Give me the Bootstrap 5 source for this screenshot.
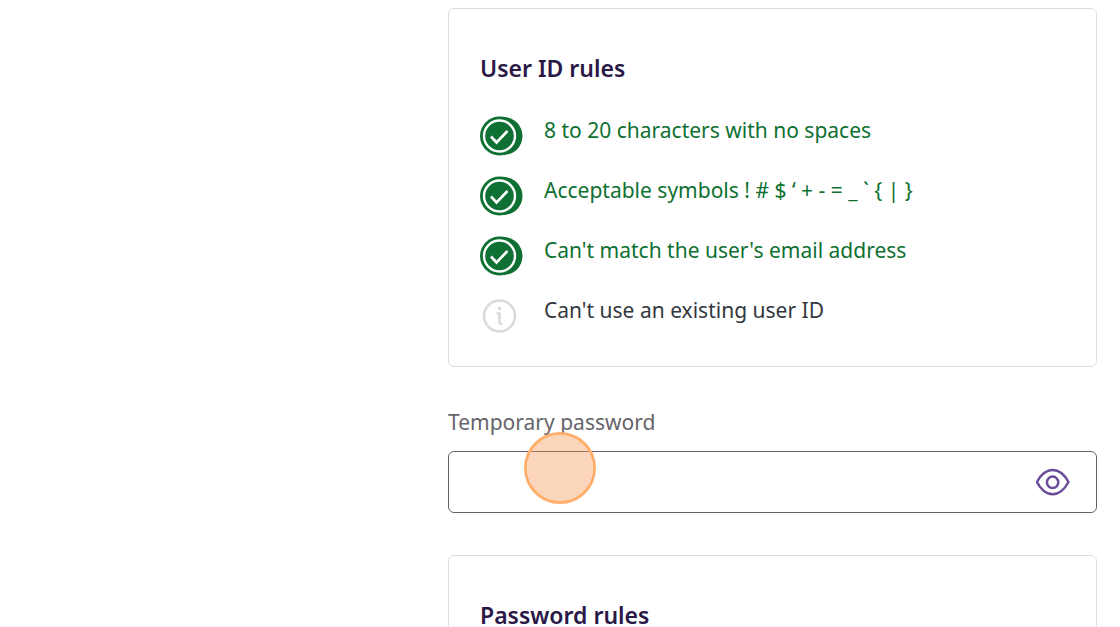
<!DOCTYPE html>
<html lang="en">
<head>
<meta charset="utf-8">
<meta name="viewport" content="width=device-width, initial-scale=1">
<title>Create user</title>
<link href="https://cdn.jsdelivr.net/npm/bootstrap@5.3.0/dist/css/bootstrap.min.css" rel="stylesheet">
<style>
  body { font-family: "Noto Sans", "Open Sans", sans-serif; font-size: 21px; line-height: 30px; color: #333740; background: #fff; }
  .page-view { height: 100vh; overflow: hidden; }
  .form-area { margin-left: 40%; padding: 8px 23px 0 0; }
  .rules-card { border: 1px solid #dedede; border-radius: 6px; padding: 43px 31px 31px; }
  .rules-title { font-size: 23px; line-height: 32px; font-weight: 600; color: #2a1846; margin: 0 0 31px; }
  .rule-list { display: grid; gap: 20px; }
  .rule-item { display: flex; gap: 20px; height: 40px; }
  .rule-item svg { flex: none; width: 44px; height: 42px; }
  .rule-met { color: #0e7032; }
  .field-label { color: #66646a; margin: 40px 0 14px; line-height: 30px; }
  .password-box { height: 62px; margin-bottom: 42px; }
  .password-box .form-control { height: 100%; border: 1px solid #646068; border-radius: 6px; padding: 0 88px 0 20px; font-size: 21px; }
  .reveal-btn { right: 24px; top: 11px; width: 40px; height: 40px; }
  .click-marker { left: 76px; top: -19px; width: 72px; height: 72px; border: 3px solid #ffae6b; background: rgba(247, 136, 54, .34); background-clip: padding-box; pointer-events: none; z-index: 5; }
</style>
</head>
<body>
<svg class="d-none" aria-hidden="true">
  <symbol id="icon-met" viewBox="0 0 44 40">
    <ellipse cx="23.500" cy="20" rx="19" ry="19" fill="#0e7032"/>
    <circle cx="19.500" cy="20" r="19.500" fill="#0e7032"/>
    <circle cx="19.500" cy="20" r="15.500" fill="none" stroke="#fff" stroke-width="2.400"/>
    <path d="M11 20.500l5.500 6L27.500 15" fill="none" stroke="#fff" stroke-width="2.600"/>
  </symbol>
  <symbol id="icon-info" viewBox="0 0 44 40">
    <circle cx="19.500" cy="20" r="15.500" fill="none" stroke="#dadada" stroke-width="2.500"/>
    <path d="M16.500 17.500h3v9q0 1.500 3 1.500" fill="none" stroke="#dadada" stroke-width="2.500"/>
    <circle cx="19.500" cy="12.500" r="1.700" fill="#dadada"/>
  </symbol>
</svg>
<main class="page-view">
  <div class="form-area">
    <section class="rules-card">
      <h2 class="rules-title">User ID rules</h2>
      <ul class="rule-list list-unstyled mb-0">
        <li class="rule-item rule-met"><svg aria-hidden="true"><use href="#icon-met"/></svg><span>8 to 20 characters with no spaces</span></li>
        <li class="rule-item rule-met"><svg aria-hidden="true"><use href="#icon-met"/></svg><span>Acceptable symbols ! # $ ‘ + - = _ ` { | }</span></li>
        <li class="rule-item rule-met"><svg aria-hidden="true"><use href="#icon-met"/></svg><span>Can't match the user's email address</span></li>
        <li class="rule-item"><svg aria-hidden="true"><use href="#icon-info"/></svg><span>Can't use an existing user ID</span></li>
      </ul>
    </section>
    <label class="field-label d-block" for="temporary-password">Temporary password</label>
    <div class="password-box position-relative">
      <input class="form-control" type="password" id="temporary-password">
      <button class="reveal-btn btn p-0 border-0 position-absolute" type="button" aria-label="Show password">
        <svg class="d-block" width="40" height="40" viewBox="0 0 40 40" fill="none" stroke="#6b4c9a" stroke-width="2.500" stroke-linejoin="round" aria-hidden="true">
          <path d="M4 20C7 13.500 13 8 19.600 8S32 13.500 35.500 20C32 26.500 26.200 32.300 19.600 32.300S7 26.500 4 20z"/>
          <circle cx="19.600" cy="20.300" r="5.700"/>
        </svg>
      </button>
      <span class="click-marker position-absolute rounded-circle"></span>
    </div>
    <section class="rules-card">
      <h2 class="rules-title">Password rules</h2>
    </section>
  </div>
</main>
<script src="https://cdn.jsdelivr.net/npm/bootstrap@5.3.0/dist/js/bootstrap.bundle.min.js"></script>
</body>
</html>
